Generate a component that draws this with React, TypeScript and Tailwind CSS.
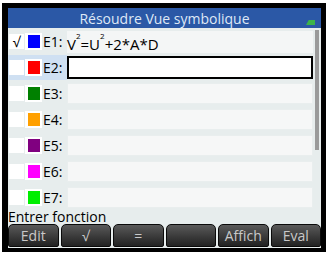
import React from "react";

const rows: { label: string; color: string }[] = [
  { label: "E1:", color: "bg-[#0000ff]" },
  { label: "E2:", color: "bg-[#ff0000]" },
  { label: "E3:", color: "bg-[#008000]" },
  { label: "E4:", color: "bg-[#ffa000]" },
  { label: "E5:", color: "bg-[#800080]" },
  { label: "E6:", color: "bg-[#ff00ff]" },
  { label: "E7:", color: "bg-[#00ee00]" },
];

const keys = ["Edit", "√", "=", "", "Affich", "Eval"];

const Row: React.FC<{ label: string; color: string; index: number }> = ({ label, color, index }) => {
  const selected = index === 1;
  return (
    <div className="flex h-[25px] items-center">
      <div className={`flex h-full items-center ${selected ? "bg-[#cfe0f2]" : ""}`}>
        <div className="w-[15px] h-[15px] ml-[1px] bg-white flex items-center justify-center text-[14px] text-black leading-none">
          {index === 0 ? "√" : ""}
        </div>
        <div className="w-[17px] h-[17px] ml-[1px] bg-white flex items-center justify-center">
          <div className={`w-[12px] h-[13px] ${color}`} />
        </div>
        <div className="w-[25px] pl-[1px] text-[14px] text-black">{label}</div>
      </div>
      {index === 0 ? (
        <div className="flex-1 h-[22px] flex items-end pb-[1px] text-[15px] text-black bg-[#f4f6f6] leading-none">
          <span>V</span>
          <span className="text-[8px] relative -top-[12px]">2</span>
          <span>=U</span>
          <span className="text-[8px] relative -top-[12px]">2</span>
          <span>+2*A*D</span>
        </div>
      ) : selected ? (
        <div className="flex-1 h-[23px] bg-white border-2 border-black" />
      ) : (
        <div className="flex-1 h-[21px] bg-[#f6f7f7] border border-[#e9eeee]" />
      )}
    </div>
  );
};

export default function App() {
  return (
    <div className="w-[328px] h-[254px] bg-white pt-[3px] pl-[2px]" style={{ fontFamily: '"Open Sans", sans-serif' }}>
      <div className="w-[324px] h-[249px] bg-black pt-[5px] pl-[6px]">
        <div className="w-[313px] h-[240px] bg-[#e7eded] flex flex-col">
          <div className="h-[20px] bg-[#2b58a6] flex items-center justify-center relative text-[14px] text-[#dfe8f6]">
            Résoudre Vue symbolique
            <div className="absolute right-[6px] top-[12px] w-[9px] h-[5px] bg-[#3cb44a] [clip-path:polygon(30%_0,100%_0,100%_100%,0_100%)]" />
          </div>
          <div className="flex">
            <div className="flex-1 flex flex-col gap-px pt-[1px]">
              {rows.map((r, i) => (
                <Row key={r.label} label={r.label} color={r.color} index={i} />
              ))}
            </div>
            <div className="w-[8px] pl-[2px] pr-[2px] pt-[2px]">
              <div className="w-[4px] h-[120px] bg-[#9a9a9a]" />
            </div>
          </div>
          <div className="h-[15px] text-[14px] text-black leading-[15px] -mt-[1px]">Entrer fonction</div>
          <div className="flex gap-[2px] mt-auto pb-[1px]">
            {keys.map((k, i) => (
              <div
                key={i}
                className="flex-1 h-[23px] rounded-t-[5px] rounded-b-[2px] border border-[#0a0a0a] bg-gradient-to-b from-[#5a5a5a] to-[#222] flex items-center justify-center text-[14px] text-[#c9c9c9]"
              >
                {k}
              </div>
            ))}
          </div>
        </div>
      </div>
    </div>
  );
}
